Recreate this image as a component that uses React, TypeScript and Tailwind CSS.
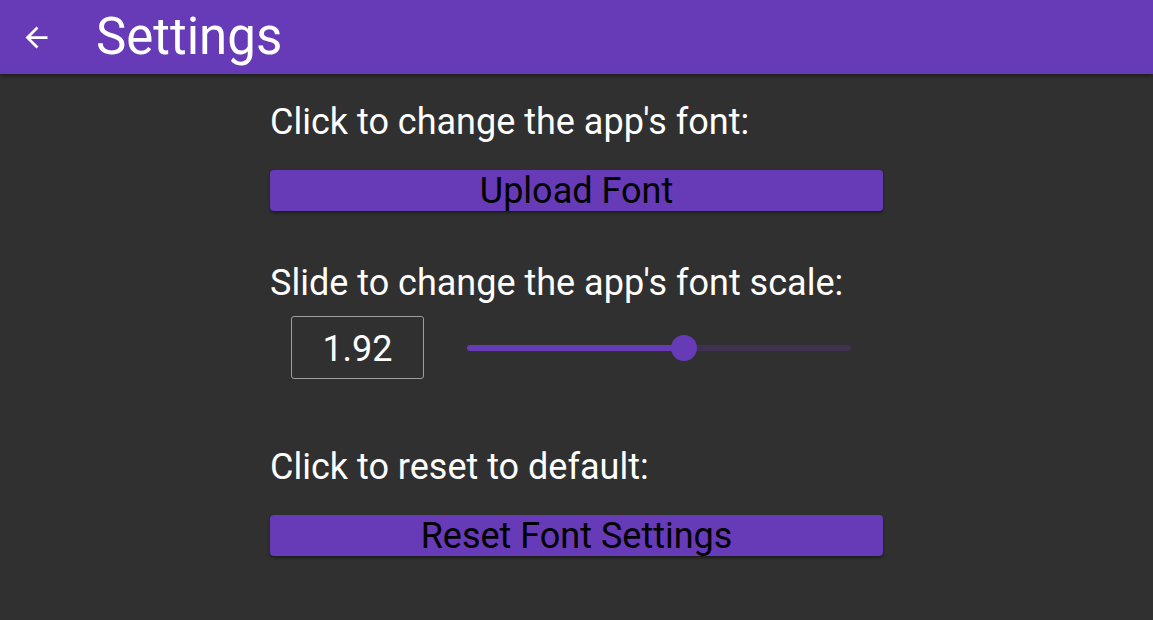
export default function App() {
  const scale = 1.92;
  const pct = 56.5;

  return (
    <div className="h-[620px] w-full bg-[#303030] font-['Roboto',sans-serif] text-white">
      <header className="flex h-[74px] items-center bg-[#673ab7] shadow-[0_2px_4px_rgba(0,0,0,0.4)]">
        <svg viewBox="0 0 24 24" className="ml-[20px] h-[33px] w-[33px] fill-white">
          <path d="M20 11H7.83l5.59-5.59L12 4l-8 8 8 8 1.41-1.41L7.83 13H20v-2z" />
        </svg>
        <h1 className="ml-[43px] -mt-[2px] text-[51px] leading-none">Settings</h1>
      </header>

      <main className="mx-auto flex w-[613px] flex-col">
        <p className="mt-[27px] text-[36px] leading-[42px]">Click to change the app's font:</p>
        <button className="mt-[27px] h-[41px] w-full rounded-[4px] bg-[#673ab7] text-[36px] leading-none text-black shadow-[0_2px_3px_rgba(0,0,0,0.4)]">
          Upload Font
        </button>

        <p className="mt-[51px] text-[36px] leading-[42px]">Slide to change the app's font scale:</p>
        <div className="mt-[12px] flex items-center">
          <div className="ml-[21px] flex h-[63px] w-[133px] items-center justify-center rounded-[3px] border border-[#9e9e9e] pt-[2px] text-[36px] leading-none">
            {scale.toFixed(2)}
          </div>
          <div className="relative ml-[43px] h-[6px] w-[384px] rounded-full bg-[#3f3250]">
            <div className="h-full rounded-full bg-[#673ab7]" style={{ width: `${pct}%` }} />
            <div
              className="absolute top-1/2 h-[26px] w-[26px] -translate-x-1/2 -translate-y-1/2 rounded-full bg-[#673ab7]"
              style={{ left: `${pct}%` }}
            />
          </div>
        </div>

        <p className="mt-[67px] text-[36px] leading-[42px]">Click to reset to default:</p>
        <button className="mt-[27px] h-[41px] w-full rounded-[4px] bg-[#673ab7] text-[36px] leading-none text-black shadow-[0_2px_3px_rgba(0,0,0,0.4)]">
          Reset Font Settings
        </button>
      </main>
    </div>
  );
}
